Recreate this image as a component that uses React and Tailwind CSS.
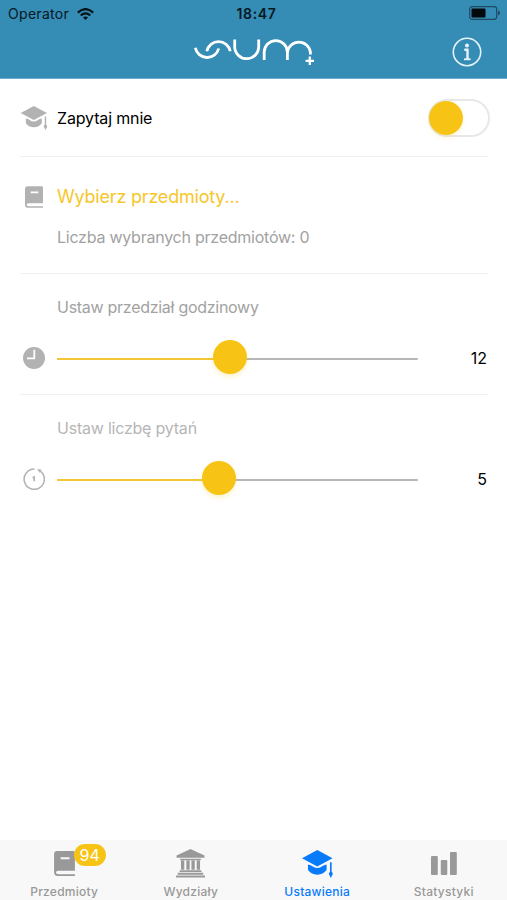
import React, { useState } from 'react';

const GraduationIcon = ({ className }) => (
  <svg className={className} viewBox="0 0 30 27" fill="currentColor">
    <path d="M14.800 0L29.600 7.900L14.800 15.800L0 7.900Z" />
    <path d="M5.800 14Q8.500 14.300 10.500 15.900Q14.800 19 19.100 15.900Q21.100 14.300 23.800 14V19.400Q20.500 23.800 14.800 23.800Q9.100 23.800 5.800 19.400Z" />
    <path d="M27.100 11.700H28.700V21.200A2 2 0 0 1 29.700 23.500L27.900 27L26.100 23.500A2 2 0 0 1 27.100 21.200Z" />
  </svg>
);

const BookIcon = ({ className }) => (
  <svg className={className} viewBox="0 0 20 24" fill="currentColor">
    <path fillRule="evenodd" d="M3 0H18.500Q20 0 20 1.500V18.900H4Q1.800 19.100 1.800 20.700Q1.800 22.300 4 22.400H20V24H3.500Q0 24 0 20.500V3Q0 0 3 0ZM6.300 5.900V7.900H14.800V5.900Z" />
  </svg>
);

const BankIcon = ({ className }) => (
  <svg className={className} viewBox="0 0 28 28" fill="currentColor">
    <path d="M14 0L27.500 6.200V8.500H.5V6.200Z" />
    <path d="M4 9.300H24V10.800H4Z M4.800 11H8V20H4.800Z M10 11H13.200V20H10Z M14.900 11H18.100V20H14.900Z M20 11H23.200V20H20Z" />
    <path d="M3.500 20.500H24.500V22.300H3.500Z M1.700 23H26.300V24.800H1.700Z M0 25.500H28V27.500H0Z" />
  </svg>
);

const ClockIcon = ({ className }) => (
  <svg className={className} viewBox="0 0 22 22">
    <circle cx="11" cy="11" r="11" fill="currentColor" />
    <path d="M11.300 2.800V11.300H4" fill="none" stroke="white" strokeWidth="1.800" />
  </svg>
);

const RepeatIcon = ({ className }) => (
  <svg className={className} viewBox="0 0 22 22" fill="none" stroke="currentColor" strokeWidth="1.500">
    <path d="M17.400 3.200A10.100 10.100 0 1 1 11.500 1.100" />
    <path d="M14.600 1.200L18 1.800L16.700 4.500Z" fill="currentColor" strokeWidth="0.500" />
    <path d="M9.600 9.900L11.200 8.900V13.300" strokeWidth="1.600" />
  </svg>
);

const StatsIcon = ({ className }) => (
  <svg className={className} viewBox="0 0 26 24" fill="currentColor">
    <rect x="0" y="4" width="6.800" height="19" rx="1" />
    <rect x="9.800" y="8" width="6.500" height="15" rx="1" />
    <rect x="19" y="0" width="6.800" height="23" rx="1" />
  </svg>
);

const Logo = () => (
  <svg className="h-8 w-[124px]" viewBox="192 36 124 32" fill="none" stroke="white" strokeWidth="2.800">
    <path d="M195.300 47.800A12 12 0 0 0 218.700 48.500" />
    <path d="M206.800 51.200A12 12 0 0 1 230.300 51.200" />
    <path d="M234.700 39.500V46.700A12 12 0 0 0 258.700 46.700V39.500" />
    <path d="M264.200 60V52.200A11.600 11.600 0 0 1 287.400 52.200V60" />
    <path d="M287.400 52.200A11.600 11.600 0 0 1 310.400 52.200V54.500" />
    <path d="M305.600 60.800H314M309.800 56.600V65" strokeWidth="2.300" />
  </svg>
);

const StatusBar = () => (
  <div className="relative flex h-7 items-center justify-between pl-2 pr-1.5 text-sm text-[#071822]">
    <div className="flex items-center gap-2">
      <span className="tracking-[0.3px]">Operator</span>
      <svg className="-mt-px h-3 w-[17px]" viewBox="0 0 17 12" fill="none" stroke="#06131b" strokeWidth="2.300">
        <path d="M.8 4.600Q8.500 -2.300 16.200 4.600" />
        <path d="M3.700 7.500Q8.500 3.300 13.300 7.500" />
        <path d="M6 9.500Q8.500 7.500 11 9.500L8.500 12Z" fill="#06131b" stroke="none" />
      </svg>
    </div>
    <span className="absolute inset-x-0 pl-1.5 text-center font-semibold tracking-[0.7px]">18:47</span>
    <svg className="-mt-[2px] h-[14px] w-8" viewBox="0 0 32 14">
      <rect x=".7" y=".7" width="27" height="12.600" rx="2.500" fill="none" stroke="#1b4a61" strokeWidth="1.200" />
      <rect x="2.500" y="2.500" width="14" height="9" rx="1" fill="#02080b" />
      <path d="M29 4.500Q31 5.200 31 7T29 9.500Z" fill="#1b4a61" />
    </svg>
  </div>
);

const Slider = ({ label, icon, value, min, max, labelClass, onChange }) => {
  // The 34px thumb stays inside the track at both ends
  const ratio = (value - min) / (max - min);
  const position = `calc(17px + (100% - 34px) * ${ratio})`;

  return (
    <div className="pt-[22px]">
      <p className={`pl-[37px] text-[16px] leading-[22px] ${labelClass}`}>{label}</p>
      <div className="mt-[22px] flex h-[35px] items-center">
        <div className="w-[37px] pl-[3px] text-[#b2b2b2]">{icon}</div>
        <div className="relative flex h-[35px] w-[361px] items-center">
          <div className="mt-[3px] h-[2px] w-full rounded-full bg-[#b6b6b6]">
            <div className="h-full rounded-full bg-[#f2c634]" style={{ width: position }} />
          </div>
          <div
            className="absolute top-0 size-[34px] -translate-x-1/2 rounded-full bg-[#f7c416] shadow-[0_3px_5px_rgba(247,196,22,0.2)]"
            style={{ left: position }}
          />
          <input
            type="range"
            min={min}
            max={max}
            value={value}
            aria-label={label}
            onChange={(e) => onChange(Number(e.target.value))}
            className="absolute inset-0 w-full cursor-pointer opacity-0"
          />
        </div>
        <span className="flex-1 pr-px text-right text-[16px]">{value}</span>
      </div>
    </div>
  );
};

const tabs = [
  { name: 'Przedmioty', icon: <BookIcon className="h-[25px] w-[21px]" />, badge: 94 },
  { name: 'Wydziały', icon: <BankIcon className="size-[29px]" /> },
  { name: 'Ustawienia', icon: <GraduationIcon className="mt-px h-7 w-[31px]" /> },
  { name: 'Statystyki', icon: <StatsIcon className="h-6 w-[26px]" /> }
];

const App = () => {
  const [enabled, setEnabled] = useState(false);
  const [hours, setHours] = useState(12);
  const [questions, setQuestions] = useState(5);
  const [activeTab, setActiveTab] = useState('Ustawienia');

  return (
    <div className="flex h-screen min-h-[900px] flex-col overflow-hidden bg-white font-['Inter','Liberation_Sans',sans-serif] text-black">
      <header className="h-[79px] shrink-0 border-b border-[#69acd0] bg-[#358cb5]">
        <StatusBar />
        <div className="grid h-[50px] grid-cols-[1fr_auto_1fr] items-start pr-[25px] pl-[26px]">
          <div className="col-start-2 pt-2">
            <Logo />
          </div>
          <button className="mt-[9px] justify-self-end" aria-label="Informacje">
            <svg className="size-[30px] text-[#e6f4fa]" viewBox="0 0 30 30" fill="none" stroke="currentColor">
              <circle cx="15" cy="15" r="13.700" strokeWidth="1.600" />
              <circle cx="15" cy="8.500" r="2" fill="currentColor" stroke="none" />
              <path d="M12.300 12.700H15.500V22" strokeWidth="2.400" />
              <path d="M12 22.300H18.600" strokeWidth="1.800" />
            </svg>
          </button>
        </div>
      </header>

      <main className="flex-1 pl-5 pr-[19px]">
        <div className="flex h-[78px] items-center border-b border-[#f0f0f0]">
          <GraduationIcon className="mt-px h-6 w-7 text-[#b2b2b2]" />
          <span className="flex-1 pl-[9px] text-[16px] tracking-[-0.15px]">Zapytaj mnie</span>
          <button
            role="switch"
            aria-checked={enabled}
            aria-label="Zapytaj mnie"
            onClick={() => setEnabled(!enabled)}
            className="-mr-[2px] h-[38px] w-[62px] rounded-full border-2 border-[#e8e8e8] bg-white"
          >
            <span
              className={`-ml-px block size-[34px] rounded-full bg-[#f7c416] shadow-[0_3px_5px_rgba(247,196,22,0.15)] ${
                enabled ? 'translate-x-[25px]' : ''
              }`}
            />
          </button>
        </div>

        <div className="h-[117px] border-b border-[#f0f0f0] pt-[27px]">
          <div className="flex items-center">
            <div className="w-[37px] pl-[5px]">
              <BookIcon className="-mt-px h-[22px] w-[18px] text-[#b2b2b2]" />
            </div>
            <button className="text-[18px] leading-[26px] tracking-[-0.2px] text-[#f7c62a]">Wybierz przedmioty...</button>
          </div>
          <p className="mt-4 pl-[37px] text-[16px] leading-[22px] tracking-[-0.24px] text-[#a2a2a2]">
            Liczba wybranych przedmiotów: 0
          </p>
        </div>

        <div className="h-[121px] border-b border-[#f0f0f0]">
          <Slider
            label="Ustaw przedział godzinowy"
            labelClass="tracking-[-0.28px] text-[#a2a2a2]"
            icon={<ClockIcon className="size-[22px]" />}
            value={hours}
            min={1}
            max={24}
            onChange={setHours}
          />
        </div>
        <Slider
          label="Ustaw liczbę pytań"
          labelClass="tracking-[-0.22px] text-[#b6b6b6]"
          icon={<RepeatIcon className="size-[22px]" />}
          value={questions}
          min={1}
          max={10}
          onChange={setQuestions}
        />
      </main>

      <nav className="grid h-[60px] shrink-0 grid-cols-4 bg-[#f8f8f8] pl-px">
        {tabs.map((tab) => (
          <button
            key={tab.name}
            onClick={() => setActiveTab(tab.name)}
            className={`flex flex-col items-center pt-2 ${
              activeTab === tab.name ? 'text-[#087bfb]' : 'text-[#999999]'
            }`}
          >
            <span className="relative flex h-[31px] items-center">
              {tab.icon}
              {tab.badge && (
                <span className="absolute -top-1 left-5 flex h-[22px] w-8 items-center justify-center rounded-full bg-[#f7c416] text-[16px] text-white">
                  {tab.badge}
                </span>
              )}
            </span>
            <span className="mt-[5px] text-[12px] font-medium leading-4 tracking-[0.25px]">{tab.name}</span>
          </button>
        ))}
      </nav>
    </div>
  );
};

export default App;
